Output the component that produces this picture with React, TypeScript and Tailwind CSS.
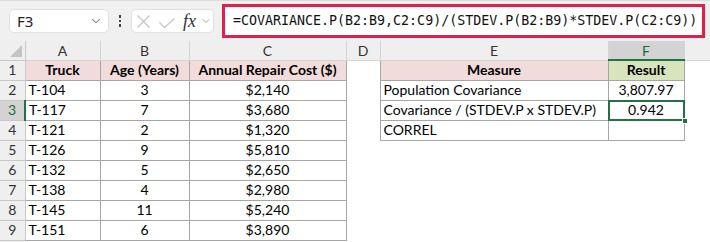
import { ChevronDown } from 'lucide-react';

const rows = [
  { truck: 'T-104', age: '3', cost: '$2,140' },
  { truck: 'T-117', age: '7', cost: '$3,680' },
  { truck: 'T-121', age: '2', cost: '$1,320' },
  { truck: 'T-126', age: '9', cost: '$5,810' },
  { truck: 'T-132', age: '5', cost: '$2,650' },
  { truck: 'T-138', age: '4', cost: '$2,980' },
  { truck: 'T-145', age: '11', cost: '$5,240' },
  { truck: 'T-151', age: '6', cost: '$3,890' },
];

const measures = [
  { label: 'Population Covariance', value: '3,807.97' },
  { label: 'Covariance / (STDEV.P x STDEV.P)', value: '0.942' },
  { label: 'CORREL', value: '' },
];

const cellFont = { fontFamily: "Lato, 'Liberation Sans', sans-serif" };

export default function App() {
  return (
    <div className="w-[710px] h-[242px] overflow-hidden bg-white text-black" style={cellFont}>
      {/* Formula bar */}
      <div className="h-[41px] bg-[#f0f0f0] border-t border-[#dcdcdc] flex items-center pl-[9px] pr-[5px]">
        <div className="w-[100px] h-[24px] bg-white border border-[#e2e2e2] rounded-[5px] flex items-center justify-between pl-[7px] pr-[5px]">
          <span className="text-[15px] text-[#222]" style={{ fontFamily: "'Noto Sans', sans-serif" }}>F3</span>
          <ChevronDown size={14} strokeWidth={1.5} className="text-[#444]" />
        </div>
        <div className="w-[22px] flex flex-col items-center gap-[2px]">
          <span className="w-[2.5px] h-[2.5px] bg-[#444]" />
          <span className="w-[2.5px] h-[2.5px] bg-[#444]" />
          <span className="w-[2.5px] h-[2.5px] bg-[#444]" />
        </div>
        <div className="w-[83px] h-[24px] bg-white border border-[#e2e2e2] rounded-[5px] flex items-center pl-[5px]">
          <svg width="13" height="13" viewBox="0 0 13 13" className="text-[#c4c4c4]">
            <path d="M0.5 0.5 L12.5 12.5 M12.5 0.5 L0.5 12.5" stroke="currentColor" strokeWidth="1.2" fill="none" />
          </svg>
          <svg width="16" height="10" viewBox="0 0 16 10" className="ml-[9px] mt-[4px] text-[#c4c4c4]">
            <path d="M0.5 4.5 L5.5 9.5 L15.5 0.5" stroke="currentColor" strokeWidth="1.2" fill="none" />
          </svg>
          <span className="ml-[8px] text-[18px] italic text-[#333] leading-none" style={{ fontFamily: "'Liberation Serif', serif" }}>
            fx
          </span>
          <ChevronDown size={12} strokeWidth={1.5} className="text-[#888] ml-[4px]" />
        </div>
        <div className="ml-[8px] flex-1 h-[34px] bg-white border-[3px] border-[#e0204c] flex items-center pl-[8px]">
          <span className="text-[13.3px] text-[#111] whitespace-nowrap" style={{ fontFamily: "'DejaVu Sans Mono', monospace" }}>
            =COVARIANCE.P(B2:B9,C2:C9)/(STDEV.P(B2:B9)*STDEV.P(C2:C9))
          </span>
        </div>
      </div>

      {/* Sheet */}
      <table className="border-collapse table-fixed w-[710px] text-[14px] leading-[18px]">
        <colgroup>
          <col className="w-[25px]" />
          <col className="w-[75px]" />
          <col className="w-[89px]" />
          <col className="w-[157px]" />
          <col className="w-[34px]" />
          <col className="w-[228px]" />
          <col className="w-[76px]" />
          <col className="w-[26px]" />
        </colgroup>
        <thead>
          <tr className="h-[19px] bg-[#efefef] text-[#333]">
            <th className="relative p-0 border-r border-b border-[#c8c8c8]">
              <svg className="absolute right-[3px] bottom-[3px]" width="12" height="12" viewBox="0 0 12 12">
                <polygon points="12,0 12,12 0,12" fill="#c4c4c4" />
              </svg>
            </th>
            {['A', 'B', 'C', 'D', 'E'].map((c) => (
              <th key={c} className="p-0 font-normal border-r border-b border-[#d4d4d4] leading-[17px]">{c}</th>
            ))}
            <th className="p-0 font-normal bg-[#d3d3d3] text-[#1e6b41] border-r border-[#d4d4d4] border-b-2 border-b-[#217346] leading-[17px]">F</th>
            <th className="p-0 border-b border-[#d4d4d4]" />
          </tr>
        </thead>
        <tbody>
          <tr className="h-[20px]">
            <td className="p-0 text-center bg-[#efefef] text-[#333] border-r border-b border-[#c8c8c8]">1</td>
            <td className="p-0 text-center font-bold bg-[#f2dcdb] border border-[#a6a6a6]">Truck</td>
            <td className="p-0 text-center font-bold bg-[#f2dcdb] border border-[#a6a6a6]">Age (Years)</td>
            <td className="p-0 text-center font-bold bg-[#f2dcdb] border border-[#a6a6a6]">Annual Repair Cost ($)</td>
            <td className="p-0" />
            <td className="p-0 text-center font-bold bg-[#f2dcdb] border border-[#a6a6a6]">Measure</td>
            <td className="p-0 text-center font-bold bg-[#d8e4bc] border border-[#a6a6a6]">Result</td>
            <td className="p-0" />
          </tr>
          {rows.map((r, i) => {
            const n = i + 2;
            const m = measures[i];
            const active = n === 3;
            return (
              <tr key={r.truck} className="h-[20px]">
                <td
                  className={
                    active
                      ? 'p-0 text-center bg-[#d3d3d3] text-[#1e6b41] border-b border-[#c8c8c8] border-r-2 border-r-[#217346]'
                      : 'p-0 text-center bg-[#efefef] text-[#333] border-r border-b border-[#c8c8c8]'
                  }
                >
                  {n}
                </td>
                <td className="p-0 pl-[3px] border border-[#a6a6a6] whitespace-nowrap">{r.truck}</td>
                <td className="p-0 text-center border border-[#a6a6a6]">{r.age}</td>
                <td className="p-0 text-center border border-[#a6a6a6]">{r.cost}</td>
                <td className="p-0" />
                {m ? (
                  <>
                    <td className="p-0 pl-[3px] border border-[#a6a6a6] whitespace-nowrap">{m.label}</td>
                    <td className="relative p-0 text-center border border-[#a6a6a6]">
                      {m.value}
                      {active && (
                        <>
                          <span className="absolute -left-[1px] -top-[1px] -right-[1px] -bottom-[1px] border-2 border-[#217346]" />
                          <span className="absolute -right-[4px] -bottom-[4px] w-[6px] h-[6px] bg-[#217346] border border-white" />
                        </>
                      )}
                    </td>
                  </>
                ) : (
                  <>
                    <td className="p-0" />
                    <td className="p-0" />
                  </>
                )}
                <td className="p-0" />
              </tr>
            );
          })}
          <tr className="h-[20px]">
            <td className="p-0 bg-[#efefef] border-r border-[#c8c8c8]" />
            <td className="p-0" colSpan={7} />
          </tr>
        </tbody>
      </table>
    </div>
  );
}
